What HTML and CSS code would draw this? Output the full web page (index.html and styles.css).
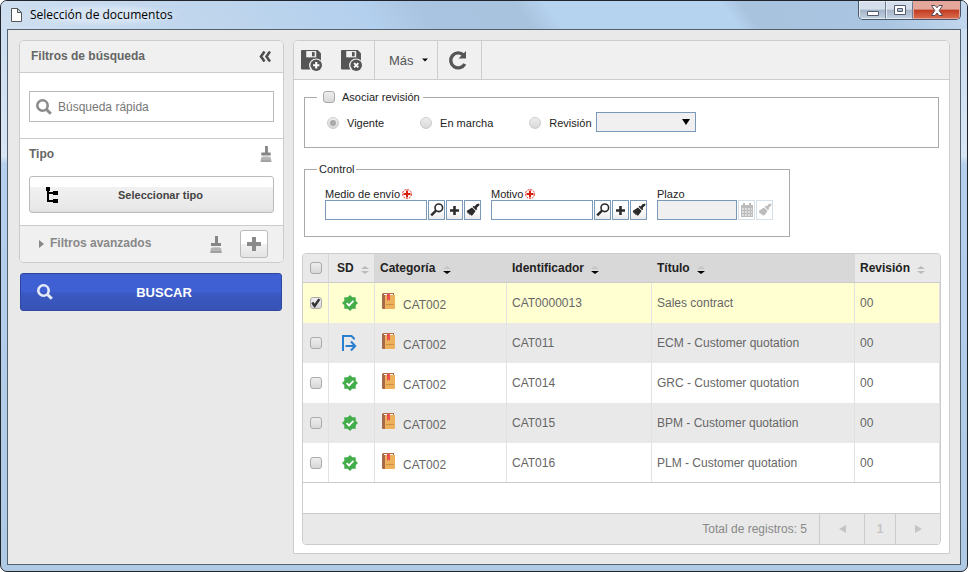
FILE: index.html
```html
<!DOCTYPE html>
<html lang="es">
<head>
    <meta charset="utf-8">
    <title>Selección de documentos</title>
    <link rel="stylesheet" href="styles.css">
</head>
<body>
    <!-- icons -->
    <svg class="sprite" aria-hidden="true">
        <symbol id="i-lens" viewBox="0 0 16 16">
            <circle cx="6.5" cy="6.5" r="5.2" fill="none" stroke="currentColor" stroke-width="2.6"/>
            <path d="M10.5 10.5L14.8 14.8" stroke="currentColor" stroke-width="3"/>
        </symbol>
        <symbol id="i-find" viewBox="0 0 14 14">
            <circle cx="8.8" cy="4.8" r="3.8" fill="none" stroke="currentColor" stroke-width="1.6"/>
            <path d="M6 7.6L1.2 12.4" stroke="currentColor" stroke-width="2.4"/>
        </symbol>
        <symbol id="i-plus" viewBox="0 0 14 14">
            <path d="M5 0h4v5h5v4H9v5H5V9H0V5h5z" fill="currentColor"/>
        </symbol>
        <symbol id="i-brush" viewBox="0 0 14 14">
            <path d="M10.5 1.2L13 0.5L13.6 2L10.6 5L11.2 6.2L10 7.2L6.6 3.8L7.6 2.8L8.6 3.4z" fill="currentColor"/>
            <path d="M6 4.4L9.6 8L7.5 11L5.6 13L4.8 11.6L3.8 12.2L3 10.4L1.8 10.4L1 8.6L0.6 8z" fill="currentColor"/>
        </symbol>
        <symbol id="i-broom" viewBox="0 0 12 17">
            <path d="M5 0h3v7h3v3H1V7h4z" fill="#868686"/>
            <path d="M2 11h8v2H2z" fill="#c9c9c9"/>
            <path d="M1 12h10l1 5H0z" fill="#b4b4b4"/>
            <path d="M1 16h10" stroke="#8f8f8f" stroke-width="1"/>
        </symbol>
        <symbol id="i-tree" viewBox="0 0 12 16">
            <path d="M0 0h4v4H3v1h4V4h5v4H7V7H3v6h4v-1h5v4H7v-1H1V4H0z" fill="currentColor"/>
        </symbol>
        <symbol id="i-save" viewBox="0 0 20 20">
            <path d="M1 0H16L19 3V11A6 6 0 0 0 9 18.5H1A1 1 0 0 1 0 17.500V1A1 1 0 0 1 1 0z" fill="currentColor"/>
            <path d="M5 1h9.500v6H5z" fill="#f0f0f0"/>
            <path d="M10.500 2h2.500v4h-2.500z" fill="currentColor"/>
            <circle cx="14.500" cy="14.500" r="6.500" fill="#f0f0f0"/>
            <circle cx="14.500" cy="14.500" r="5.500" fill="currentColor"/>
        </symbol>
        <symbol id="i-approved" viewBox="0 0 16 16">
            <path d="M8 0L10.300 2.300H13.700V5.700L16 8L13.700 10.300V13.700H10.300L8 16L5.700 13.700H2.300V10.300L0 8L2.300 5.700V2.300H5.700z" fill="#43ad49"/>
            <path d="M4.600 8.200L7 10.400L11.400 5.800" fill="none" stroke="#fff" stroke-width="1.800"/>
        </symbol>
        <symbol id="i-sent" viewBox="0 0 15 17">
            <path d="M1 16V1H9.500L12 3.500V4.500" fill="none" stroke="#2a7fd0" stroke-width="2"/>
            <path d="M3.500 11H13M9 6.500L13.200 11L9 15.500" fill="none" stroke="#2a7fd0" stroke-width="2"/>
        </symbol>
        <symbol id="i-book" viewBox="0 0 13 16">
            <path d="M1 0h11v3H0V1z" fill="#b06f4c"/>
            <path d="M2 1h9v2H2z" fill="#fff"/>
            <path d="M0 2h3v14H1a1 1 0 0 1-1-1z" fill="#a66a4a"/>
            <path d="M3 2h10v13a1 1 0 0 1-1 1H3z" fill="#edb15c"/>
            <path d="M3 1h8v1H3z" fill="#fff"/>
            <path d="M5 1h3v7L6.500 6.500L5 8z" fill="#e94f4f"/>
            <path d="M4 11.500h8" stroke="#cf9244"/>
        </symbol>
        <symbol id="i-calendar" viewBox="0 0 14 14">
            <path d="M1 2h12v12H1z" fill="currentColor"/>
            <path d="M3 0h2v3H3zM9 0h2v3H9z" fill="currentColor"/>
            <path d="M2 6h10M2 9h10M2 12h10" stroke="#fff" stroke-width="1" stroke-dasharray="2 1"/>
        </symbol>
        <symbol id="i-required" viewBox="0 0 10 10">
            <circle cx="5" cy="5" r="4.500" fill="#fff" stroke="#e0301e" stroke-dasharray="2 1"/>
            <path d="M4 1.500h2V4h2.500v2H6v2.500H4V6H1.500V4H4z" fill="#d8200f"/>
        </symbol>
        <symbol id="i-sort" viewBox="0 0 8 8">
            <path class="up" d="M0 3L4 0L8 3z"/>
            <path class="down" d="M0 5H8L4 8z"/>
        </symbol>
    </svg>

    <div class="window">
        <header class="titlebar">
            <svg class="doc-icon" viewBox="0 0 11 14" width="11" height="14"><path d="M1 .5H6.500L10.500 4.500V13.500H.5V.5zM6.500 .5V4.500H10.500" fill="#fff" stroke="#555"/></svg>
            <h1>Selección de documentos</h1>
            <div class="win-buttons">
                <button class="win-btn" aria-label="Minimizar"><svg width="12" height="14" viewBox="0 0 12 14"><path d="M.5 8.500h11v4H.5z" fill="#fff" stroke="#555b6e"/></svg></button>
                <button class="win-btn" aria-label="Maximizar"><svg width="12" height="10" viewBox="0 0 12 10"><path d="M.5 .5h11v9H.5zM3.500 3.500v3h5v-3z" fill="#fff" fill-rule="evenodd" stroke="#555b6e"/></svg></button>
                <button class="win-btn win-close" aria-label="Cerrar"><svg width="12" height="11" viewBox="0 0 12 11"><path d="M.5 .5H4L6 2.800L8 .5H11.500L8.200 5.500L11.500 10.500H8L6 8L4 10.500H.5L3.800 5.500z" fill="#fff" stroke="#5b4a5a"/></svg></button>
            </div>
        </header>

        <div class="content">
            <aside class="sidebar">
                <section class="filters">
                    <div class="filters-head">
                        <h2>Filtros de búsqueda</h2>
                        <button class="icon-btn" aria-label="Contraer"><svg width="12" height="11" viewBox="0 0 12 11"><path d="M5.500 .5L2 5.500L5.500 10.500M11 .5L7.500 5.500L11 10.500" fill="none" stroke="#4f4f4f" stroke-width="2.600"/></svg></button>
                    </div>
                    <div class="quick">
                        <label class="search-box">
                            <svg width="16" height="16"><use href="#i-lens"/></svg>
                            <input type="text" placeholder="Búsqueda rápida" aria-label="Búsqueda rápida">
                        </label>
                    </div>
                    <div class="type">
                        <div class="type-head">
                            <h3>Tipo</h3>
                            <button class="icon-btn" aria-label="Limpiar tipo"><svg width="12" height="16"><use href="#i-broom"/></svg></button>
                        </div>
                        <button class="select-type">
                            <svg width="12" height="16"><use href="#i-tree"/></svg>
                            <span>Seleccionar tipo</span>
                        </button>
                    </div>
                    <div class="advanced">
                        <svg width="5" height="8" viewBox="0 0 5 8"><path d="M0 0L5 4L0 8z" fill="#888"/></svg>
                        <h3>Filtros avanzados</h3>
                        <button class="icon-btn" aria-label="Limpiar filtros"><svg width="12" height="17"><use href="#i-broom"/></svg></button>
                        <button class="add-filter" aria-label="Agregar filtro"><svg width="14" height="14"><use href="#i-plus"/></svg></button>
                    </div>
                </section>
                <button class="buscar">
                    <svg width="16" height="16"><use href="#i-lens"/></svg>
                    <span>BUSCAR</span>
                </button>
            </aside>

            <main class="panel">
                <div class="toolbar">
                    <div class="tool-group saves">
                        <button class="icon-btn" aria-label="Guardar y agregar"><svg width="21" height="21" viewBox="0 0 20 20"><use href="#i-save"/><path d="M14.500 11.500v6M11.500 14.500h6" stroke="#fff" stroke-width="2"/></svg></button>
                        <button class="icon-btn" aria-label="Guardar y salir"><svg width="21" height="21" viewBox="0 0 20 20"><use href="#i-save"/><path d="M12.500 12.500l4 4M16.500 12.500l-4 4" stroke="#fff" stroke-width="1.800"/></svg></button>
                    </div>
                    <button class="tool-group more">Más <svg width="6" height="4" viewBox="0 0 6 4"><path d="M0 0.500H6L3 3.500z" fill="#000"/></svg></button>
                    <button class="tool-group refresh" aria-label="Actualizar"><svg width="20" height="21" viewBox="0 0 20 21"><path d="M15.500 5A7.500 7.500 0 1 0 16.800 14" fill="none" stroke="#555" stroke-width="3.400"/><path d="M18 1V8.500H10.500z" fill="#555"/></svg></button>
                </div>

                <div class="forms">
                    <fieldset class="revision">
                        <legend><input type="checkbox" id="asociar"><label for="asociar">Asociar revisión</label></legend>
                        <div class="radios">
                            <label class="radio"><input type="radio" name="rev" checked disabled>Vigente</label>
                            <label class="radio"><input type="radio" name="rev" disabled>En marcha</label>
                            <label class="radio"><input type="radio" name="rev" disabled>Revisión</label>
                            <div class="select-wrap">
                                <select aria-label="Revisión"><option></option></select>
                            </div>
                        </div>
                    </fieldset>

                    <fieldset class="control">
                        <legend>Control</legend>
                        <div class="fields">
                            <div class="field">
                                <label for="medio">Medio de envío <svg width="10" height="10"><use href="#i-required"/></svg></label>
                                <div class="field-row">
                                    <input type="text" id="medio">
                                    <button class="mini" aria-label="Buscar"><svg width="14" height="14"><use href="#i-find"/></svg></button>
                                    <button class="mini" aria-label="Agregar"><svg width="9" height="9"><use href="#i-plus"/></svg></button>
                                    <button class="mini" aria-label="Limpiar"><svg width="14" height="14"><use href="#i-brush"/></svg></button>
                                </div>
                            </div>
                            <div class="field">
                                <label for="motivo">Motivo <svg width="10" height="10"><use href="#i-required"/></svg></label>
                                <div class="field-row">
                                    <input type="text" id="motivo">
                                    <button class="mini" aria-label="Buscar"><svg width="14" height="14"><use href="#i-find"/></svg></button>
                                    <button class="mini" aria-label="Agregar"><svg width="9" height="9"><use href="#i-plus"/></svg></button>
                                    <button class="mini" aria-label="Limpiar"><svg width="14" height="14"><use href="#i-brush"/></svg></button>
                                </div>
                            </div>
                            <div class="field">
                                <label for="plazo">Plazo</label>
                                <div class="field-row">
                                    <input type="text" id="plazo" class="short" disabled>
                                    <button class="mini" aria-label="Calendario" disabled><svg width="14" height="14"><use href="#i-calendar"/></svg></button>
                                    <button class="mini" aria-label="Limpiar" disabled><svg width="14" height="14"><use href="#i-brush"/></svg></button>
                                </div>
                            </div>
                        </div>
                    </fieldset>
                </div>

                <div class="grid">
                    <table>
                        <colgroup>
                            <col class="c-check"><col class="c-sd"><col class="c-cat"><col class="c-id"><col><col class="c-rev">
                        </colgroup>
                        <thead>
                            <tr>
                                <th class="center"><input type="checkbox" aria-label="Seleccionar todos"></th>
                                <th>SD <svg class="sort" width="8" height="8"><use href="#i-sort"/></svg></th>
                                <th class="sorted">Categoría <svg class="sort" width="8" height="8"><use href="#i-sort"/></svg></th>
                                <th class="sorted">Identificador <svg class="sort" width="8" height="8"><use href="#i-sort"/></svg></th>
                                <th class="sorted">Título <svg class="sort" width="8" height="8"><use href="#i-sort"/></svg></th>
                                <th>Revisión <svg class="sort" width="8" height="8"><use href="#i-sort"/></svg></th>
                            </tr>
                        </thead>
                        <tbody>
                            <tr class="selected">
                                <td class="center"><input type="checkbox" aria-label="CAT0000013" checked></td>
                                <td class="center status"><svg width="16" height="16"><use href="#i-approved"/></svg></td>
                                <td><span class="cat"><svg width="13" height="16"><use href="#i-book"/></svg>CAT002</span></td>
                                <td>CAT0000013</td>
                                <td>Sales contract</td>
                                <td>00</td>
                            </tr>
                            <tr>
                                <td class="center"><input type="checkbox" aria-label="CAT011"></td>
                                <td class="center status"><svg width="15" height="17"><use href="#i-sent"/></svg></td>
                                <td><span class="cat"><svg width="13" height="16"><use href="#i-book"/></svg>CAT002</span></td>
                                <td>CAT011</td>
                                <td>ECM - Customer quotation</td>
                                <td>00</td>
                            </tr>
                            <tr>
                                <td class="center"><input type="checkbox" aria-label="CAT014"></td>
                                <td class="center status"><svg width="16" height="16"><use href="#i-approved"/></svg></td>
                                <td><span class="cat"><svg width="13" height="16"><use href="#i-book"/></svg>CAT002</span></td>
                                <td>CAT014</td>
                                <td>GRC - Customer quotation</td>
                                <td>00</td>
                            </tr>
                            <tr>
                                <td class="center"><input type="checkbox" aria-label="CAT015"></td>
                                <td class="center status"><svg width="16" height="16"><use href="#i-approved"/></svg></td>
                                <td><span class="cat"><svg width="13" height="16"><use href="#i-book"/></svg>CAT002</span></td>
                                <td>CAT015</td>
                                <td>BPM - Customer quotation</td>
                                <td>00</td>
                            </tr>
                            <tr>
                                <td class="center"><input type="checkbox" aria-label="CAT016"></td>
                                <td class="center status"><svg width="16" height="16"><use href="#i-approved"/></svg></td>
                                <td><span class="cat"><svg width="13" height="16"><use href="#i-book"/></svg>CAT002</span></td>
                                <td>CAT016</td>
                                <td>PLM - Customer quotation</td>
                                <td>00</td>
                            </tr>
                        </tbody>
                    </table>
                    <footer class="pager">
                        <span class="total">Total de registros: 5</span>
                        <button aria-label="Anterior"><svg width="7" height="8" viewBox="0 0 7 8"><path d="M7 0V8L0 4z" fill="#c4c4c4"/></svg></button>
                        <button class="page">1</button>
                        <button aria-label="Siguiente"><svg width="7" height="8" viewBox="0 0 7 8"><path d="M0 0V8L7 4z" fill="#c4c4c4"/></svg></button>
                    </footer>
                </div>
            </main>
        </div>
    </div>
</body>
</html>
```
FILE: styles.css
```css
* {
    box-sizing: border-box;
}
body {
    margin: 0;
    background-color: white;
    font-family: "Liberation Sans", Arial, sans-serif;
    font-size: 12px;
    color: #666;
}
h1, h2, h3 {
    margin: 0;
}
button, input, select {
    font-family: inherit;
    margin: 0;
    padding: 0;
}
svg {
    display: block;
    flex: none;
}
.sprite {
    position: absolute;
    width: 0;
    height: 0;
}
.icon-btn {
    border: 0;
    background: none;
}

/* window */
.window {
    display: flex;
    flex-direction: column;
    min-height: 100vh;
    padding: 0 6px 6px;
    border: 1px solid #22242c;
    border-radius: 7px;
    background: linear-gradient(#c9dcf0 0, #d9e6f4 155px, #b5d0ec 163px, #b0cae6);
}
.titlebar {
    display: flex;
    align-items: center;
    height: 28px;
    margin: 0 -6px;
    padding: 0 6px 0 10px;
    border-radius: 6px 6px 0 0;
    background: linear-gradient(55deg, #cfdff0 0, #bdd4ec 25%, #b3d0ee 38%, #a9c4e0 44%, #a8c3de 54%, #b5d2ee 57%, #b5d2ee 75%, #a8c3de 77%, #a9c5e1 90%, #c6daef 100%);
}
.titlebar h1 {
    padding: 2px 8px;
    border-radius: 12px;
    background: radial-gradient(closest-side, #d6e4f4 60%, rgba(214,228,244,0));
    font-family: "Open Sans", "Noto Sans", sans-serif;
    font-size: 12px;
    line-height: 18px;
    font-weight: normal;
    color: black;
}
.win-buttons {
    display: flex;
    align-self: flex-start;
    margin-left: auto;
    border: 1px solid #4b5569;
    border-top: 0;
    border-radius: 0 0 5px 5px;
    overflow: hidden;
}
.win-btn {
    display: flex;
    align-items: center;
    justify-content: center;
    width: 27px;
    height: 18px;
    border: 1px solid #e4ecf5;
    border-right: 1px solid #6f7c90;
    background: linear-gradient(#d5dfeb 45%, #a3b3c6 50%, #c0cfdf);
}
.win-close {
    width: 47px;
    border-color: #e6a398;
    background: linear-gradient(#e3a79b 45%, #c13a20 50%, #d96a4c);
}

.content {
    display: flex;
    flex: 1;
    gap: 9px;
    padding: 10px 10px 10px 11px;
    border: 1px solid #53616f;
    background-color: #e9e9e9;
}

/* sidebar */
.sidebar {
    flex: none;
    width: 265px;
}
.filters {
    border: 1px solid #ccc;
    border-radius: 5px;
    background-color: white;
    overflow: hidden;
}
.filters-head {
    display: flex;
    align-items: center;
    justify-content: space-between;
    height: 32px;
    padding: 0 12px 0 11px;
    border-bottom: 1px solid #ccc;
    background-color: #f0f0f0;
}
.filters h2, .filters h3 {
    font-size: 12px;
    line-height: 14px;
    font-weight: bold;
    color: #666;
}
.filters .filters-head h2 {
    padding-bottom: 2px;
}
.quick {
    padding: 18px 9px 16px;
    border-bottom: 1px solid #ccc;
}
.search-box {
    display: flex;
    align-items: center;
    height: 31px;
    padding: 0 6px;
    gap: 6px;
    border: 1px solid #bbb;
    color: #8b8b8b;
}
.search-box input {
    flex: 1;
    min-width: 0;
    border: 0;
    outline: 0;
    background: none;
    font-size: 12px;
}
.search-box input::placeholder {
    color: #777;
}
.type {
    padding: 7px 9px 12px;
    border-bottom: 1px solid #ccc;
}
.type-head {
    display: flex;
    justify-content: space-between;
    height: 30px;
    padding-right: 2px;
}
.filters .type-head h3 {
    line-height: 16px;
}
.type-head .icon-btn {
    height: 16px;
}
.select-type {
    display: flex;
    align-items: center;
    width: 100%;
    height: 37px;
    padding: 0 16px;
    border: 1px solid #bbb;
    border-radius: 3px;
    background: linear-gradient(white 28%, #f1f1f1 30%, #e8e8e8 90%, #dfdfdf);
    color: black;
}
.select-type span {
    flex: 1;
    padding-left: 6px;
    font-size: 11px;
    font-weight: bold;
    color: #444;
}
.advanced {
    display: flex;
    align-items: center;
    height: 36px;
    padding: 0 15px 0 19px;
    background-color: #f0f0f0;
}
.filters .advanced h3 {
    flex: 1;
    padding: 0 0 2px 6px;
    color: #888;
}
.add-filter {
    display: flex;
    align-items: center;
    justify-content: center;
    width: 28px;
    height: 28px;
    margin-left: 18px;
    border: 1px solid #bbb;
    border-radius: 3px;
    background: linear-gradient(white 50%, #f0f0f0 52%, #e4e4e4);
    color: #8a8a8a;
}
.buscar {
    display: flex;
    align-items: center;
    width: 262px;
    height: 38px;
    margin: 10px 1px 0;
    padding: 0 16px;
    border: 1px solid #2b479f;
    border-radius: 3px;
    background: linear-gradient(#3f60d3 50%, #3b59c3 52%, #3753b6);
    color: white;
}
.buscar svg {
    color: #e4e9f7;
}
.buscar span {
    flex: 1;
    padding-left: 10px;
    font-size: 13px;
    font-weight: bold;
}

/* main panel */
.panel {
    display: flex;
    flex-direction: column;
    flex: 1;
    min-width: 0;
    border: 1px solid #ccc;
    border-radius: 5px 5px 0 0;
    background-color: white;
}
.toolbar {
    display: flex;
    height: 39px;
    border-bottom: 1px solid #ccc;
    border-radius: 4px 4px 0 0;
    background-color: #f0f0f0;
    color: #555;
}
.tool-group {
    display: flex;
    align-items: center;
    border: 0;
    border-right: 1px solid #ccc;
    background: none;
}
.saves {
    gap: 19px;
    padding: 0 12px 0 7px;
}
.saves .icon-btn {
    color: #555;
}
.more {
    gap: 8px;
    padding: 0 9px 0 14px;
    font-size: 13px;
    color: #555;
}
.refresh {
    padding: 0 13px 0 10px;
}
.forms {
    padding: 10px;
    font-size: 11px;
    color: #222;
}
fieldset {
    margin: 0;
    border: 1px solid #aaa;
}
legend {
    display: flex;
    align-items: center;
    line-height: 14px;
}
.revision {
    padding: 8px 22px 15px 12px;
}
.revision legend {
    gap: 7px;
    padding: 0 3px 0 6px;
}
.radios {
    display: flex;
    align-items: center;
    padding-left: 10px;
}
.radio {
    display: flex;
    align-items: center;
    gap: 8px;
    margin: 2px 36px 0 0;
}
.radio:nth-child(3) {
    margin-right: 4px;
}
input[type="checkbox"], input[type="radio"] {
    display: block;
    appearance: none;
    flex: none;
    width: 12px;
    height: 12px;
    border: 1px solid #aaa;
    border-radius: 3px;
    background: linear-gradient(#eee, #d8d8d8);
}
input[type="radio"] {
    padding: 2px;
    border-color: #ccc;
    border-radius: 50%;
}
input[type="radio"]:checked::before {
    content: "";
    display: block;
    width: 6px;
    height: 6px;
    border-radius: 50%;
    background-color: #aaa;
}
input[type="checkbox"]:checked::before {
    content: "";
    display: block;
    width: 10px;
    height: 10px;
    background-color: #333;
    clip-path: polygon(8% 52%, 28% 38%, 42% 58%, 78% 5%, 98% 18%, 46% 95%, 36% 95%);
}
.select-wrap {
    position: relative;
}
.select-wrap::after {
    content: "";
    position: absolute;
    top: 7px;
    right: 6px;
    border: 4px solid transparent;
    border-top: 6px solid black;
    border-bottom: 0;
    pointer-events: none;
}
select {
    display: block;
    appearance: none;
    width: 100px;
    height: 20px;
    border: 1px solid #7a98b8;
    border-radius: 0;
    background-color: #f0f0f0;
}
.control {
    width: 486px;
    margin-top: 14px;
    padding: 11px 16px 16px 12px;
}
.control legend {
    padding: 0 2px;
}
.fields {
    display: flex;
    gap: 10px;
    padding-left: 8px;
}
.field label {
    display: flex;
    align-items: center;
    gap: 2px;
    height: 13px;
}
.field-row {
    display: flex;
    gap: 1px;
}
.field-row input {
    width: 102px;
    height: 20px;
    border: 1px solid #7a98b8;
    background-color: white;
}
.field-row .short {
    width: 80px;
    background-color: #f0f0f0;
}
.mini {
    display: flex;
    align-items: center;
    justify-content: center;
    width: 17px;
    height: 20px;
    border: 1px solid #7a98b8;
    background: linear-gradient(white 50%, #ebebeb);
    color: #2b2b2b;
}
.mini:disabled {
    border-color: #d3e0ea;
    background: white;
    color: #bcbcbc;
}

/* documents table */
.grid {
    display: flex;
    flex-direction: column;
    flex: 1;
    margin: 6px 8px 8px;
    border: 1px solid #ccc;
    border-radius: 4px;
    overflow: hidden;
}
table {
    width: 100%;
    table-layout: fixed;
    border-collapse: separate;
    border-spacing: 0;
    border-bottom: 1px solid #ccc;
}
.c-check {
    width: 26px;
}
.c-sd {
    width: 46px;
}
.c-cat {
    width: 132px;
}
.c-id {
    width: 145px;
}
.c-rev {
    width: 85px;
}
th {
    height: 29px;
    padding: 0 0 0 5px;
    border-bottom: 1px solid #ccc;
    background-color: #e9e9e9;
    text-align: left;
    color: #222;
}
th:nth-child(2) {
    padding-left: 8px;
}
th:first-child, th:nth-child(2) {
    border-right: 1px solid #d6d6d6;
}
th.sorted {
    background-color: #d8d8d8;
}
.sort {
    --up: #bbb;
    --down: #bbb;
    display: inline-block;
    margin-left: 4px;
    vertical-align: -2px;
}
.sorted .sort {
    --up: #c6c6c6;
    --down: black;
}
.up {
    fill: var(--up);
}
.down {
    fill: var(--down);
}
td {
    height: 40px;
    padding: 0 0 0 5px;
    border-right: 1px solid #e2e2e2;
}
tbody tr:last-child td {
    height: 39px;
}
tbody tr:nth-child(even) {
    background-color: #e9e9e9;
}
tbody tr.selected {
    background-color: #ffffd2;
}
th.center, td.center {
    padding: 0;
}
td.status {
    padding-right: 4px;
}
.center input, .center svg {
    margin: 0 auto;
}
.cat {
    display: flex;
    gap: 8px;
    padding: 4px 0 0 2px;
    line-height: 24px;
}
.pager {
    display: flex;
    align-items: stretch;
    justify-content: flex-end;
    height: 31px;
    margin-top: auto;
    border-top: 1px solid #ccc;
    background-color: #e9e9e9;
    color: #888;
}
.total {
    align-self: center;
    padding-right: 12px;
}
.pager button {
    display: flex;
    align-items: center;
    justify-content: center;
    width: 45px;
    border: 0;
    border-left: 1px solid #ccc;
    background: none;
}
.pager .page {
    width: 31px;
    font-size: 12px;
    font-weight: bold;
    color: #c4c4c4;
}
```
